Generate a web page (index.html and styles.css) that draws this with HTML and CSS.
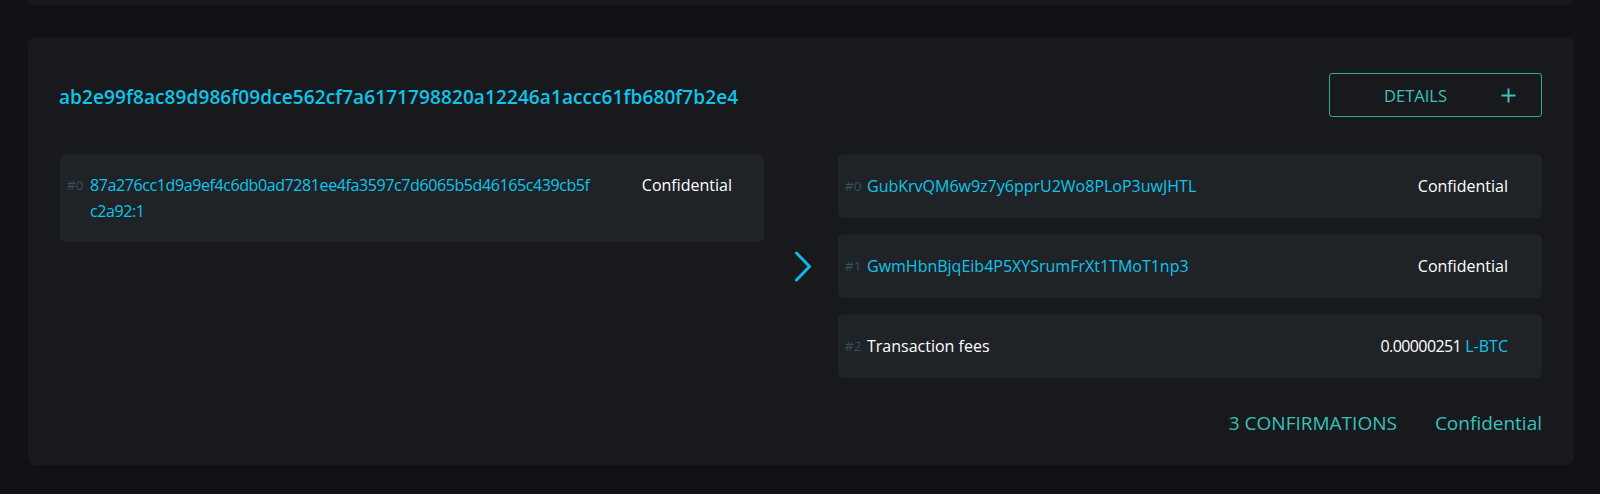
FILE: index.html
```html
<!DOCTYPE html>
<html lang="en">
<head>
<meta charset="utf-8">
<title>Transaction</title>
<link rel="stylesheet" href="styles.css">
</head>
<body>
<div class="prev-card"></div>
<section class="tx-card">
  <header class="tx-head">
    <a class="tx-id">ab2e99f8ac89d986f09dce562cf7a6171798820a12246a1accc61fb680f7b2e4</a>
    <button class="details-btn"><span>DETAILS</span>
      <svg class="plus" width="15" height="15" viewBox="0 0 15 15"><path d="M7.5 0.5v14M0.5 7.5h14" stroke="#3cc0b8" stroke-width="2" fill="none"/></svg>
    </button>
  </header>
  <div class="io">
    <div class="ins">
      <div class="row in-row">
        <span class="idx">#0</span>
        <span class="hash in-hash">87a276cc1d9a9ef4c6db0ad7281ee4fa3597c7d6065b5d46165c439cb5fc2a92:1</span>
        <span class="val">Confidential</span>
      </div>
    </div>
    <div class="arrow">
      <svg width="19" height="31" viewBox="0 0 19 31"><path d="M2.5 2L15.5 15.5L2.5 29" stroke="#12b8e3" stroke-width="3" fill="none" stroke-linecap="round" stroke-linejoin="round"/></svg>
    </div>
    <div class="outs">
      <div class="row out-row">
        <span class="idx">#0</span>
        <span class="addr">GubKrvQM6w9z7y6pprU2Wo8PLoP3uwJHTL</span>
        <span class="val">Confidential</span>
      </div>
      <div class="row out-row">
        <span class="idx">#1</span>
        <span class="addr">GwmHbnBjqEib4P5XYSrumFrXt1TMoT1np3</span>
        <span class="val">Confidential</span>
      </div>
      <div class="row out-row">
        <span class="idx">#2</span>
        <span class="label">Transaction fees</span>
        <span class="val"><span class="num">0.00000251</span> <span class="asset">L-BTC</span></span>
      </div>
    </div>
  </div>
  <footer class="tx-foot">
    <span>3 CONFIRMATIONS</span>
    <span>Confidential</span>
  </footer>
</section>
</body>
</html>
```
FILE: styles.css
```css
* { box-sizing: border-box; }
html, body { margin: 0; padding: 0; }
body {
  background: #111215;
  font-family: "Open Sans", "Noto Sans", sans-serif;
  color: #fff;
  height: 494px;
  overflow: hidden;
}
.prev-card {
  height: 5px;
  margin: 0 26px 0 28px;
  background: #17191d;
  border-radius: 0 0 8px 8px;
}
.tx-card {
  margin: 32px 26px 0 28px;
  background: #17191d;
  border-radius: 8px;
  padding: 36px 32px 28px 32px;
}
.tx-head {
  display: flex;
  justify-content: space-between;
  align-items: center;
  height: 44px;
}
.tx-id {
  color: #0fc5ea;
  font-size: 19px;
  font-weight: 600;
  letter-spacing: 0.1px;
  margin-left: -1px;
  margin-top: 3px;
}
.details-btn {
  width: 213px;
  height: 44px;
  background: transparent;
  border: 1.5px solid #2aa9a5;
  border-radius: 3px;
  display: flex;
  align-items: center;
  justify-content: space-between;
  padding: 0 25px 0 54px;
  color: #3cc0b8;
  font-family: inherit;
  font-size: 16.5px;
}
.io {
  display: grid;
  grid-template-columns: 1fr 74px 1fr;
  margin-top: 37px;
  align-items: start;
}
.row {
  background: #1f2328;
  border-radius: 6px;
  display: flex;
  align-items: flex-start;
  font-size: 16px;
  line-height: 26px;
}
.in-row {
  padding: 18px 32px 18px 7px;
}
.outs {
  display: flex;
  flex-direction: column;
  gap: 16px;
}
.out-row {
  height: 64px;
  align-items: center;
  padding: 0 34px 0 7px;
}
.idx {
  color: #34505c;
  font-size: 13.5px;
  width: 23px;
  flex: none;
}
.out-row .idx { width: 22px; }
.hash, .addr { color: #0fc5ea; }
.in-hash {
  width: 505px;
  word-break: break-all;
  letter-spacing: -0.4px;
}
.addr, .label { flex: 1; }
.label { color: #fff; }
.val { margin-left: auto; color: #fff; white-space: nowrap; }
.num { letter-spacing: -0.6px; }
.asset { color: #0fc5ea; }
.arrow {
  align-self: center;
  display: flex;
  justify-content: center;
  padding-left: 4px;
}
.tx-foot {
  display: flex;
  justify-content: flex-end;
  gap: 38px;
  margin-top: 31px;
  color: #3cc0b8;
  font-size: 19px;
  line-height: 28px;
}
```
